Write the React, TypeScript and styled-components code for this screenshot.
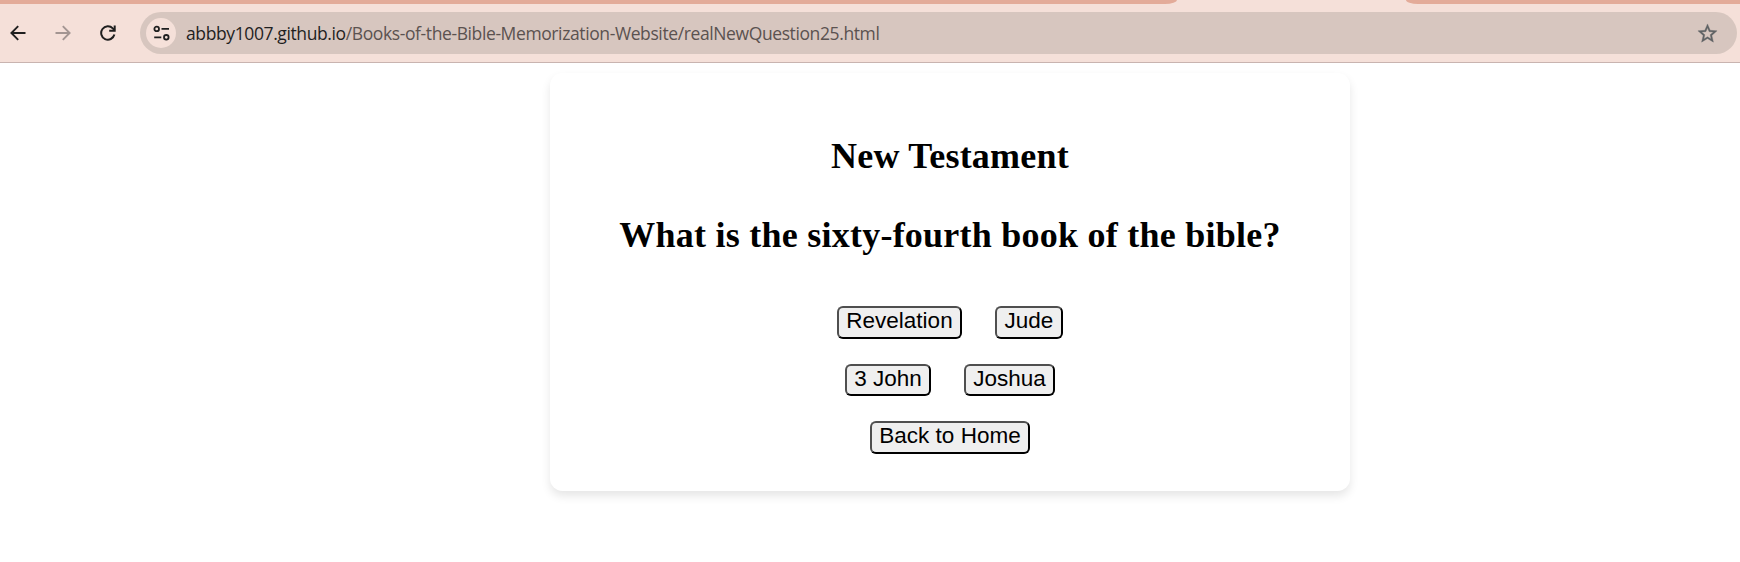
import React from "react";
import styled, { createGlobalStyle } from "styled-components";

const GlobalStyle = createGlobalStyle`
  *, *::before, *::after { box-sizing: border-box; }
  body { margin: 0; background: #fff; overflow: hidden; }
`;

const Window = styled.div`
  display: flex;
  flex-direction: column;
  height: 562px;
  background: #fff;
`;

const Chrome = styled.header`
  display: flex;
  flex-direction: column;
  height: 63px;
  background: #f5e0d9;
  border-bottom: 1px solid #c9b4b0;
`;

const TabStrip = styled.div`
  display: flex;
  justify-content: space-between;
  height: 4px;
`;

const TabEdge = styled.div<{ $side: "left" | "right" }>`
  width: ${(p) => (p.$side === "left" ? 1177 : 334)}px;
  background: #e3ab99;
  border-radius: ${(p) => (p.$side === "left" ? "0 0 12px 0 / 0 0 4px 0" : "0 0 0 12px / 0 0 0 4px")};
`;

const Toolbar = styled.div`
  display: flex;
  align-items: center;
  padding: 8px 3px 8px 5px;
`;

const NavButton = styled.span<{ $muted?: boolean }>`
  display: flex;
  justify-content: center;
  width: 25px;
  margin-right: 20px;
  color: ${(p) => (p.$muted ? "#a39592" : "#1f1f1f")};
  svg { display: block; }
`;

const AddressBar = styled.div`
  display: flex;
  align-items: center;
  flex: 1;
  height: 42px;
  padding: 0 18px 0 6px;
  border-radius: 21px;
  background: #d7c6bf;
`;

const SiteInfo = styled.span`
  display: flex;
  align-items: center;
  justify-content: center;
  width: 30px;
  height: 30px;
  border-radius: 50%;
  background: #f5e0d9;
`;

const Url = styled.span`
  flex: 1;
  margin-left: 10px;
  font: 400 17.5px/24px "Open Sans", sans-serif;
  letter-spacing: -0.39px;
  color: #5b5250;
  white-space: nowrap;
`;

const Host = styled.span`
  color: #1f1f1f;
`;

const Page = styled.main`
  display: flex;
  justify-content: center;
  padding: 10px 0 0 160px;
`;

const Card = styled.section`
  display: flex;
  flex-direction: column;
  align-items: center;
  width: 800px;
  height: 418px;
  padding-top: 63px;
  border-radius: 12.5px;
  box-shadow: 0 5px 10px rgba(0, 0, 0, 0.1);
`;

const Heading = styled.h2`
  height: 41px;
  margin: 0 0 38px;
  font: 700 36px/41px "Liberation Serif", serif;
  letter-spacing: 0.24px;
  color: #000;
  white-space: nowrap;
`;

const Answers = styled.div`
  display: flex;
  flex-direction: column;
  align-items: center;
  gap: 25px;
  margin-top: 12px;
`;

const AnswerRow = styled.div`
  display: flex;
  gap: 33px;
`;

const AnswerButton = styled.button<{ $w: number; $h?: number }>`
  width: ${(p) => p.$w}px;
  height: ${(p) => p.$h ?? 33}px;
  padding: 0 0 3px;
  border: 2px solid;
  border-color: #4f4f4f #000 #000 #4f4f4f;
  border-radius: 6px;
  background: #efefef;
  font: 400 22.5px/26px "Liberation Sans", sans-serif;
  color: #000;
  white-space: nowrap;
`;

const BackIcon = () => (
  <svg width="16" height="16" viewBox="0 0 16 16" fill="none" stroke="currentColor" strokeWidth="1.9">
    <path d="M15.5 8H2M8.2 1.2 1.4 8l6.8 6.8" />
  </svg>
);

const ForwardIcon = () => (
  <svg width="16" height="16" viewBox="0 0 16 16" fill="none" stroke="currentColor" strokeWidth="1.9">
    <path d="M.5 8H14M7.8 1.2 14.6 8l-6.8 6.8" />
  </svg>
);

const ReloadIcon = () => (
  <svg width="16" height="16" viewBox="0 0 16 16" fill="none" stroke="currentColor" strokeWidth="2">
    <path d="M14.4 9.6A6.7 6.7 0 1 1 12.8 3.4L14.6 5.4" />
    <path d="M14.7.4V5.8H9.2" />
  </svg>
);

const TuneIcon = () => (
  <svg width="17" height="16" viewBox="0 0 17 16" fill="none" stroke="#1f1f1f" strokeWidth="1.8">
    <circle cx="3.7" cy="3.9" r="2.3" />
    <path d="M8.5 3.9H16M1.2 12.3H8.3" />
    <circle cx="13.3" cy="12.3" r="2.3" />
  </svg>
);

const StarIcon = () => (
  <svg width="23" height="23" viewBox="0 0 24 24" fill="#5f6264" stroke="#5f6264" strokeWidth="0.35">
    <path d="M22 9.24l-7.19-.62L12 2 9.19 8.63 2 9.24l5.46 4.73L5.82 21 12 17.27 18.18 21l-1.63-7.03L22 9.24zM12 15.4l-3.76 2.27 1-4.28-3.32-2.88 4.38-.38L12 6.1l1.71 4.04 4.38.38-3.32 2.88 1 4.28L12 15.4z" />
  </svg>
);

export default function App() {
  return (
    <Window>
      <GlobalStyle />
      <Chrome>
        <TabStrip>
          <TabEdge $side="left" />
          <TabEdge $side="right" />
        </TabStrip>
        <Toolbar>
          <NavButton><BackIcon /></NavButton>
          <NavButton $muted><ForwardIcon /></NavButton>
          <NavButton><ReloadIcon /></NavButton>
          <AddressBar>
            <SiteInfo><TuneIcon /></SiteInfo>
            <Url>
              <Host>abbby1007.github.io</Host>/Books-of-the-Bible-Memorization-Website/realNewQuestion25.html
            </Url>
            <StarIcon />
          </AddressBar>
        </Toolbar>
      </Chrome>
      <Page>
        <Card>
          <Heading>New Testament</Heading>
          <Heading>What is the sixty-fourth book of the bible?</Heading>
          <Answers>
            <AnswerRow>
              <AnswerButton $w={125}>Revelation</AnswerButton>
              <AnswerButton $w={68}>Jude</AnswerButton>
            </AnswerRow>
            <AnswerRow>
              <AnswerButton $w={86} $h={32}>3 John</AnswerButton>
              <AnswerButton $w={91} $h={32}>Joshua</AnswerButton>
            </AnswerRow>
            <AnswerButton $w={160}>Back to Home</AnswerButton>
          </Answers>
        </Card>
      </Page>
    </Window>
  );
}
